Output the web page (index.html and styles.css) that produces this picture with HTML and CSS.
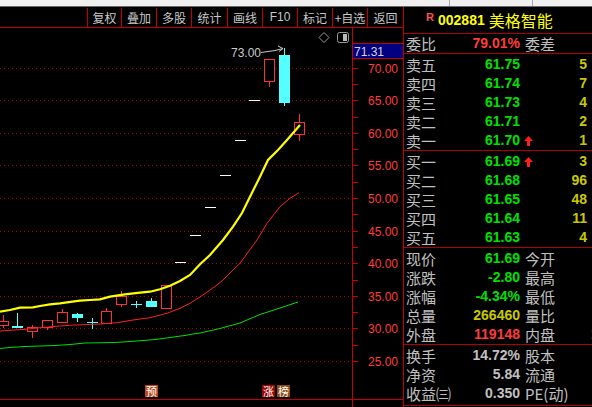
FILE: index.html
```html
<!DOCTYPE html>
<html>
<head>
<meta charset="utf-8">
<link rel="stylesheet" href="styles.css">
</head>
<body>
<div class="topband"><div class="tb1"></div><div class="tb2"></div></div>
<div class="main">
  <div class="left">
    <div class="toolbar">
      <div class="btn w34">复权</div>
      <div class="btn">叠加</div>
      <div class="btn">多股</div>
      <div class="btn w36">统计</div>
      <div class="btn">画线</div>
      <div class="btn lat">F10</div>
      <div class="btn">标记</div>
      <div class="btn">+自选</div>
      <div class="btn w36">返回</div>
    </div>
    <svg class="chart" width="403" height="379" viewBox="0 28 403 379">
      <g class="grid">
        <line x1="0" x2="352" y1="68.5" y2="68.5"/>
        <line x1="0" x2="352" y1="100.5" y2="100.5"/>
        <line x1="0" x2="352" y1="133.5" y2="133.5"/>
        <line x1="0" x2="352" y1="165.5" y2="165.5"/>
        <line x1="0" x2="352" y1="198.5" y2="198.5"/>
        <line x1="0" x2="352" y1="231.5" y2="231.5"/>
        <line x1="0" x2="352" y1="263.5" y2="263.5"/>
        <line x1="0" x2="352" y1="296.5" y2="296.5"/>
        <line x1="0" x2="352" y1="328.5" y2="328.5"/>
        <line x1="0" x2="352" y1="361.5" y2="361.5"/>
      </g>
      <g class="axisl">
        <line x1="352.5" x2="352.5" y1="28" y2="407"/>
        <line x1="0" x2="403" y1="399.5" y2="399.5"/>
        <line x1="352" x2="358" y1="68.5" y2="68.5"/>
        <line x1="352" x2="358" y1="84.5" y2="84.5"/>
        <line x1="352" x2="358" y1="100.5" y2="100.5"/>
        <line x1="352" x2="358" y1="117.5" y2="117.5"/>
        <line x1="352" x2="358" y1="133.5" y2="133.5"/>
        <line x1="352" x2="358" y1="149.5" y2="149.5"/>
        <line x1="352" x2="358" y1="165.5" y2="165.5"/>
        <line x1="352" x2="358" y1="182.5" y2="182.5"/>
        <line x1="352" x2="358" y1="198.5" y2="198.5"/>
        <line x1="352" x2="358" y1="214.5" y2="214.5"/>
        <line x1="352" x2="358" y1="231.5" y2="231.5"/>
        <line x1="352" x2="358" y1="247.5" y2="247.5"/>
        <line x1="352" x2="358" y1="263.5" y2="263.5"/>
        <line x1="352" x2="358" y1="280.5" y2="280.5"/>
        <line x1="352" x2="358" y1="296.5" y2="296.5"/>
        <line x1="352" x2="358" y1="312.5" y2="312.5"/>
        <line x1="352" x2="358" y1="328.5" y2="328.5"/>
        <line x1="352" x2="358" y1="345.5" y2="345.5"/>
        <line x1="352" x2="358" y1="361.5" y2="361.5"/>
      </g>
      <g class="ax">
        <text x="368" y="73">70.00</text>
        <text x="368" y="105">65.00</text>
        <text x="368" y="138">60.00</text>
        <text x="368" y="170">55.00</text>
        <text x="368" y="203">50.00</text>
        <text x="368" y="236">45.00</text>
        <text x="368" y="268">40.00</text>
        <text x="368" y="301">35.00</text>
        <text x="368" y="333">30.00</text>
        <text x="368" y="366">25.00</text>
      </g>
      <rect class="curbox" x="352.5" y="43.5" width="51" height="15"/>
      <text class="curtxt" x="354" y="56">71.31</text>

      <path class="icon" d="M324 32.5 L329 37.5 L324 42.5 L319 37.5 Z"/>
      <rect class="icon" x="337.5" y="32.5" width="11" height="10" rx="2"/>
      <rect class="iconf" x="343" y="34" width="4" height="7"/>

      <g class="wu">
        <line x1="3.5" x2="3.5" y1="315" y2="328"/>
        <line x1="32.5" x2="32.5" y1="325" y2="338"/>
        <line x1="47.5" x2="47.5" y1="320" y2="330"/>
        <line x1="62.5" x2="62.5" y1="309" y2="323"/>
        <line x1="106.5" x2="106.5" y1="308" y2="323"/>
        <line x1="121.5" x2="121.5" y1="291" y2="307"/>
        <line x1="269.5" x2="269.5" y1="59" y2="87"/>
        <line x1="299.5" x2="299.5" y1="114" y2="141"/>
      </g>
      <g class="up">
        <rect x="-1.5" y="321.5" width="10" height="4"/>
        <rect x="27.5" y="327.5" width="10" height="4"/>
        <rect x="42.5" y="320.5" width="10" height="7"/>
        <rect x="57.5" y="312.5" width="10" height="10"/>
        <rect x="101.5" y="311.5" width="10" height="12"/>
        <rect x="116.5" y="296.5" width="10" height="8"/>
        <rect x="161.5" y="285.5" width="10" height="23"/>
        <rect x="264.5" y="59.5" width="10" height="22"/>
        <rect x="294.5" y="122.5" width="10" height="12"/>
      </g>
      <g class="wd">
        <line x1="17.5" x2="17.5" y1="313" y2="328"/>
        <line x1="77.5" x2="77.5" y1="313" y2="322"/>
        <line x1="92.5" x2="92.5" y1="318" y2="329"/>
        <line x1="87" x2="98" y1="322.5" y2="322.5"/>
        <line x1="136.5" x2="136.5" y1="301" y2="308"/>
        <line x1="131" x2="142" y1="304.5" y2="304.5"/>
        <line x1="151.5" x2="151.5" y1="298" y2="307"/>
        <line x1="284.5" x2="284.5" y1="48" y2="106"/>
      </g>
      <g class="dn">
        <rect x="12" y="326" width="11" height="2"/>
        <rect x="72" y="314" width="11" height="4"/>
        <rect x="146" y="301" width="11" height="6"/>
        <rect x="279" y="55" width="11" height="48"/>
      </g>
      <g class="flat">
        <line x1="175" x2="186" y1="262.5" y2="262.5"/>
        <line x1="190" x2="201" y1="235.5" y2="235.5"/>
        <line x1="205" x2="216" y1="207.5" y2="207.5"/>
        <line x1="220" x2="231" y1="175.5" y2="175.5"/>
        <line x1="235" x2="246" y1="140.5" y2="140.5"/>
        <line x1="249" x2="260" y1="100.5" y2="100.5"/>
      </g>

      <polyline class="ma20" points="0,348.5 10,347.5 25,346.5 55,345.5 70,344.5 85,343 115,342.5 130,341.5 143,340.5 155,339.5 163,338.5 170,337.5 177,336.5 185,335.5 193,334 200,333 220,328.5 240,323 260,314.5 280,308 298,302"/>
      <polyline class="ma10" points="0,331 10,330.3 25,329.3 40,327.7 60,326 70,325.3 100,324 117,322.7 133,320 150,317.7 167,313.3 180,308.3 190,303.3 200,297 217,285 223,280 233,270 240,263.3 257,240 267,223.3 280,206.7 290,198.3 299,192.7"/>
      <polyline class="ma5" points="0,311.7 10,310 20,307.7 33,307.3 40,306 50,304.3 60,303.3 67,302.3 80,300.7 90,300 100,299.3 110,296.7 125,294.3 140,292.7 150,291.7 160,289.3 170,285.7 180,281 190,275 200,264.3 210,255 223,240 233,226.7 242,213 250,196.7 260,176.7 268,160 278,150 287,140 300,125"/>

      <text class="hi" x="231" y="57">73.00</text>
      <polyline class="arr" points="261,52.5 268,51.5 275,50.5 283,48.5"/>
      <polyline class="arr" points="278,46 283,48.5 279,51.5"/>

      <rect class="b1" x="145" y="385" width="13" height="12"/>
      <text class="bt" x="151.5" y="395.5">预</text>
      <rect class="b2" x="262" y="385" width="13" height="12"/>
      <text class="bt" x="268.5" y="395.5">涨</text>
      <rect class="b3" x="277" y="385" width="13" height="12"/>
      <text class="bt" x="283.5" y="395.5">榜</text>
    </svg>
  </div>
  <div class="panel">
    <div class="hdr"><span class="r">R</span><span class="code">002881</span><span class="name">美格智能</span></div>
    <div class="wb">
      <div class="row"><span class="l">委比</span><span class="v red">79.01%</span><span class="l2">委差</span></div>
    </div>
    <div class="sec5">
      <div class="row"><span class="l">卖五</span><span class="v grn">61.75</span><span class="ar"></span><span class="q">5</span></div>
      <div class="row"><span class="l">卖四</span><span class="v grn">61.74</span><span class="ar"></span><span class="q">7</span></div>
      <div class="row"><span class="l">卖三</span><span class="v grn">61.73</span><span class="ar"></span><span class="q">4</span></div>
      <div class="row"><span class="l">卖二</span><span class="v grn">61.71</span><span class="ar"></span><span class="q">2</span></div>
      <div class="row"><span class="l">卖一</span><span class="v grn">61.70</span><span class="ar"><svg class="upar" width="9" height="10" viewBox="0 0 9 10"><polygon points="4.5,0 9,5 6,5 6,10 3,10 3,5 0,5"/></svg></span><span class="q">1</span></div>
    </div>
    <div class="sec5">
      <div class="row"><span class="l">买一</span><span class="v grn">61.69</span><span class="ar"><svg class="upar" width="9" height="10" viewBox="0 0 9 10"><polygon points="4.5,0 9,5 6,5 6,10 3,10 3,5 0,5"/></svg></span><span class="q">3</span></div>
      <div class="row"><span class="l">买二</span><span class="v grn">61.68</span><span class="ar"></span><span class="q">96</span></div>
      <div class="row"><span class="l">买三</span><span class="v grn">61.65</span><span class="ar"></span><span class="q">48</span></div>
      <div class="row"><span class="l">买四</span><span class="v grn">61.64</span><span class="ar"></span><span class="q">11</span></div>
      <div class="row"><span class="l">买五</span><span class="v grn">61.63</span><span class="ar"></span><span class="q">4</span></div>
    </div>
    <div class="sec5">
      <div class="row"><span class="l">现价</span><span class="v grn">61.69</span><span class="l2">今开</span></div>
      <div class="row"><span class="l">涨跌</span><span class="v grn">-2.80</span><span class="l2">最高</span></div>
      <div class="row"><span class="l">涨幅</span><span class="v grn">-4.34%</span><span class="l2">最低</span></div>
      <div class="row"><span class="l">总量</span><span class="v yel">266460</span><span class="l2">量比</span></div>
      <div class="row"><span class="l">外盘</span><span class="v red">119148</span><span class="l2">内盘</span><span class="v2 grn">1</span></div>
    </div>
    <div class="sec3">
      <div class="row"><span class="l">换手</span><span class="v gry">14.72%</span><span class="l2">股本</span></div>
      <div class="row"><span class="l">净资</span><span class="v gry">5.84</span><span class="l2">流通</span></div>
      <div class="row"><span class="l">收益㈢</span><span class="v gry">0.350</span><span class="l2">PE(动)</span></div>
    </div>
  </div>
</div>
</body>
</html>
```
FILE: styles.css
```css
html, body {
  margin: 0;
  padding: 0;
  background: #000;
  overflow: hidden;
}
body {
  width: 592px;
  height: 407px;
  font-family: "Noto Sans CJK SC", sans-serif;
  color: #c0c0c0;
}
.topband {
  height: 6px;
  background: #f0f0f0;
  border-bottom: 1px solid #6a6a6a;
  display: flex;
}
.tb1 { width: 449px; border-right: 1px solid #a8a8a8; }
.tb2 { width: 82px; border-right: 1px solid #a8a8a8; }

.main { display: flex; height: 400px; }
.left {
  width: 403px;
  flex: none;
  display: flex;
  flex-direction: column;
}
.toolbar {
  height: 20px;
  border-bottom: 1px solid #c00000;
  display: flex;
  justify-content: flex-end;
}
.btn {
  width: 34px;
  flex: none;
  margin-top: 1px;
  border-left: 1px solid #c00000;
  font-size: 12px;
  line-height: 19px;
  text-align: center;
  color: #c8c8c8;
}
.btn.w34 { width: 33px; }
.btn.w36 { width: 35px; }
.btn.lat { font-family: "Liberation Sans", sans-serif; font-size: 12px; }

.chart { display: block; }
.grid line { stroke: #b00000; stroke-width: 1; stroke-dasharray: 1 3; }
.axisl line { stroke: #c80000; stroke-width: 1; }
.ax { font: 12px "Liberation Sans", sans-serif; fill: #ff3c3c; }
.curbox { fill: #000080; stroke: #c80000; stroke-width: 1; }
.curtxt { font: 12px "Liberation Sans", sans-serif; fill: #d8d8d8; }
.icon { fill: none; stroke: #9a9a9a; stroke-width: 1; }
.iconf { fill: #b8b8b8; }

.wu line { stroke: #ff3232; stroke-width: 1; }
.up rect { fill: #000; stroke: #ff3232; stroke-width: 1; }
.wd line { stroke: #54ffff; stroke-width: 1; }
.dn rect { fill: #54ffff; }
.flat line { stroke: #ffffff; stroke-width: 1; }

.ma5 { fill: none; stroke: #ffff00; stroke-width: 2.2; }
.ma10 { fill: none; stroke: #ff2020; stroke-width: 1; }
.ma20 { fill: none; stroke: #00e000; stroke-width: 1; }

.hi { font: 12px "Liberation Sans", sans-serif; fill: #c8c8c8; }
.arr { fill: none; stroke: #c8c8c8; stroke-width: 1; }

.b1 { fill: #b8461a; }
.b2 { fill: #a00000; }
.b3 { fill: #8c4a10; }
.bt { font: 11px "Noto Sans CJK SC", sans-serif; fill: #ffffff; text-anchor: middle; }

.panel {
  width: 188px;
  flex: none;
  height: 400px;
  border-left: 1px solid #c00000;
  overflow: hidden;
}
.hdr {
  height: 26px;
  border-bottom: 1px solid #b00000;
  display: flex;
  align-items: center;
  padding-left: 22px;
}
.r {
  font: bold 11px/11px "Liberation Sans", sans-serif;
  color: #ff5050;
  align-self: flex-start;
  margin-top: 5px;
  width: 12px;
}
.code {
  font: bold 14px "Liberation Sans", sans-serif;
  color: #ffff00;
  margin-right: 4px;
}
.name {
  font-size: 16px;
  color: #ffff00;
  line-height: 20px;
}
.wb {
  height: 19px;
  border-bottom: 1px solid #b00000;
}
.sec5 {
  height: 95px;
  padding-top: 1px;
  border-bottom: 1px solid #b00000;
}
.sec3 {
  height: 57px;
  padding-top: 1px;
  padding-bottom: 2px;
  border-bottom: 1px solid #b00000;
}
.row {
  display: flex;
  height: 19px;
  align-items: center;
  padding-left: 2px;
  white-space: nowrap;
}
.row > span { flex: none; }
.l {
  width: 62px;
  font-size: 15px;
  line-height: 19px;
  color: #c0c0c0;
}
.v {
  width: 52px;
  text-align: right;
  font: bold 14px/19px "Liberation Sans", sans-serif;
}
.ar {
  width: 20px;
  height: 19px;
  display: flex;
  align-items: center;
  padding-left: 4px;
  box-sizing: border-box;
}
.upar { display: block; fill: #ff1e1e; }
.q {
  width: 47px;
  text-align: right;
  font: bold 14px/19px "Liberation Sans", sans-serif;
  color: #c8c800;
}
.l2 {
  width: 66px;
  margin-left: 5px;
  font-size: 15px;
  line-height: 19px;
  color: #c0c0c0;
}
.v2 {
  font: bold 14px/19px "Liberation Sans", sans-serif;
}
.grn { color: #00e000; }
.red { color: #ff3c3c; }
.yel { color: #c8c800; }
.gry { color: #c0c0c0; }
```
